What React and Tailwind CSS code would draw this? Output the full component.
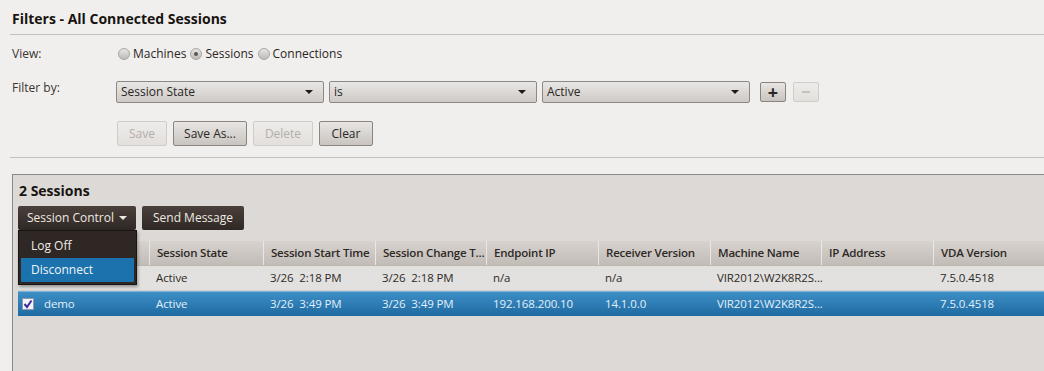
import React from "react";

const font = { fontFamily: '"Open Sans", "Noto Sans", "Liberation Sans", sans-serif' };

function Radio({ checked }) {
  return (
    <span className="inline-block w-[12px] h-[12px] rounded-full border border-[#a9a6a3] bg-gradient-to-b from-[#e8e6e4] to-[#bdbab7] relative mr-[3px]">
      {checked && <span className="absolute left-[3px] top-[3px] w-[4px] h-[4px] rounded-full bg-[#5a5654]" />}
    </span>
  );
}

function Select({ label, w }) {
  return (
    <div className={`h-[22px] ${w} border border-[#8d8884] rounded-[2px] bg-gradient-to-b from-[#e9e7e5] to-[#cdc9c6] flex items-center justify-between pl-[4px] pr-[10px] text-[12px] text-[#2a2624]`}>
      <span>{label}</span>
      <span className="w-0 h-0 border-l-[4px] border-r-[4px] border-t-[4px] border-l-transparent border-r-transparent border-t-[#1e1b1a]" />
    </div>
  );
}

function Btn({ label, w, disabled }) {
  return (
    <div
      className={`h-[25px] ${w} rounded-[2px] flex items-center justify-center text-[12px] border ${
        disabled
          ? "border-[#cfccc9] bg-gradient-to-b from-[#eeecea] to-[#e2dfdc] text-[#b3afab]"
          : "border-[#8a8581] bg-gradient-to-b from-[#e8e5e2] to-[#c9c4c0] text-[#2a2624]"
      }`}
    >
      {label}
    </div>
  );
}

const cols = [
  { w: "w-[131px]", h: "" },
  { w: "w-[114px]", h: "Session State" },
  { w: "w-[112px]", h: "Session Start Time" },
  { w: "w-[111px]", h: "Session Change T..." },
  { w: "w-[112px]", h: "Endpoint IP" },
  { w: "w-[112px]", h: "Receiver Version" },
  { w: "w-[111px]", h: "Machine Name" },
  { w: "w-[112px]", h: "IP Address" },
  { w: "w-[112px]", h: "VDA Version" },
];

const rows = [
  ["", "Active", "3/26  2:18 PM", "3/26  2:18 PM", "n/a", "n/a", "VIR2012\\W2K8R2S...", "", "7.5.0.4518"],
  ["demo", "Active", "3/26  3:49 PM", "3/26  3:49 PM", "192.168.200.10", "14.1.0.0", "VIR2012\\W2K8R2S...", "", "7.5.0.4518"],
];

export default function App() {
  return (
    <div className="w-[1044px] h-[371px] overflow-hidden bg-[#f1efed] text-[#2a2624]" style={font}>
      <div className="pl-[10px]">
        <div className="h-[35px] border-b border-[#c3bfbc] flex items-center pl-[2px] pt-[3px]">
          <span className="text-[14px] font-bold text-[#171412]">Filters - All Connected Sessions</span>
        </div>
        <div className="h-[36px] flex items-center text-[12px] pl-[2px] pt-[1px]">
          <span className="w-[106px] text-[#3a3532]">View:</span>
          <Radio />
          <span className="mr-[4px]">Machines</span>
          <Radio checked />
          <span className="mr-[4px]">Sessions</span>
          <Radio />
          <span>Connections</span>
        </div>
        <div className="flex items-start">
          <span className="w-[106px] text-[12px] pl-[2px] pt-[8px] text-[#3a3532]">Filter by:</span>
          <div className="flex flex-col pt-[10px]">
            <div className="flex items-center gap-[5px]">
              <Select label="Session State" w="w-[208px]" />
              <Select label="is" w="w-[208px]" />
              <Select label="Active" w="w-[208px]" />
              <div className="ml-[5px] w-[26px] h-[20px] border border-[#8a8581] rounded-[2px] bg-gradient-to-b from-[#e8e5e2] to-[#c9c4c0] flex items-center justify-center text-[18px] leading-none font-bold text-[#2a2624]">+</div>
              <div className="ml-[2px] w-[26px] h-[20px] border border-[#cfccc9] rounded-[2px] bg-gradient-to-b from-[#eeecea] to-[#e2dfdc] flex items-center justify-center">
                <span className="w-[8px] h-[2px] bg-[#c4c0bc]" />
              </div>
            </div>
            <div className="flex gap-[6px] mt-[18px] pl-[1px]">
              <Btn label="Save" w="w-[50px]" disabled />
              <Btn label="Save As..." w="w-[74px]" />
              <Btn label="Delete" w="w-[60px]" disabled />
              <Btn label="Clear" w="w-[54px]" />
            </div>
          </div>
        </div>
        <div className="mt-[11px] border-b border-[#c3bfbc]" />
      </div>

      <div className="mt-[16px] ml-[12px] h-[200px] border-l border-t border-[#8d8884] bg-[#dcd9d6] relative">
        <div className="pl-[6px] pt-[6px] text-[14px] font-bold text-[#171412] leading-[19px]">2 Sessions</div>
        <div className="flex gap-[6px] pl-[5px] mt-[6px]">
          <div className="w-[118px] h-[24px] rounded-[2px] bg-gradient-to-b from-[#4a403b] to-[#2f2824] text-[#efe9e4] text-[12px] flex items-center justify-center gap-[5px]">
            Session Control
            <span className="w-0 h-0 border-l-[4px] border-r-[4px] border-t-[4px] border-l-transparent border-r-transparent border-t-[#efe9e4]" />
          </div>
          <div className="w-[102px] h-[24px] rounded-[2px] bg-gradient-to-b from-[#4a403b] to-[#2f2824] text-[#efe9e4] text-[12px] flex items-center justify-center">
            Send Message
          </div>
        </div>

        <div className="mt-[11px] ml-[5px]">
          <div className="flex h-[25px] bg-gradient-to-b from-[#d7d2ce] to-[#c2bcb7] border-b border-[#bdb7b2]">
            {cols.map((c, i) => (
              <div key={i} className={`${c.w} shrink-0 flex items-center pl-[7px] text-[11.5px] tracking-[-0.2px] whitespace-nowrap overflow-hidden font-semibold text-[#2d2926] ${i > 0 ? "border-l border-[#eae6e3]" : ""}`}>
                {c.h}
              </div>
            ))}
          </div>
          {rows.map((r, ri) => (
            <div
              key={ri}
              className={`flex h-[25px] text-[11.5px] ${
                ri === 1
                  ? "bg-gradient-to-b from-[#3d8fc6] to-[#1e6aa1] text-[#e3f0fa] border-t border-[#7bb3da]"
                  : "bg-[#e3e1df] text-[#2d2926] border-b border-[#d2cecb]"
              }`}
            >
              {r.map((cell, ci) => (
                <div key={ci} className={`${cols[ci].w} shrink-0 flex items-center whitespace-pre tracking-[-0.1px] ${ci === 0 ? "pl-[4px]" : "pl-[7px]"}`}>
                  {ci === 0 && ri === 1 ? (
                    <>
                      <span className="w-[12px] h-[12px] bg-[#f4f4f8] border border-[#8d9ab0] flex items-center justify-center mr-[10px]">
                        <svg width="10" height="10" viewBox="0 0 10 10">
                          <path d="M1.5 5 L4 8 L8.5 1.5" fill="none" stroke="#3a2f9a" strokeWidth="2" />
                        </svg>
                      </span>
                      <span>{cell}</span>
                    </>
                  ) : (
                    cell
                  )}
                </div>
              ))}
            </div>
          ))}
        </div>

        <div className="absolute left-[5px] top-[55px] w-[119px] h-[55px] bg-[#2e2724] border border-[#1a1513] shadow-[1px_2px_3px_rgba(0,0,0,0.35)] p-[2px] flex flex-col">
          <div className="h-[25px] flex items-center pl-[10px] text-[12px] text-[#f0ebe7]">Log Off</div>
          <div className="h-[24px] flex items-center pl-[10px] text-[12px] text-[#f0f6fb] bg-[#1c72ad]">Disconnect</div>
        </div>
      </div>
    </div>
  );
}
